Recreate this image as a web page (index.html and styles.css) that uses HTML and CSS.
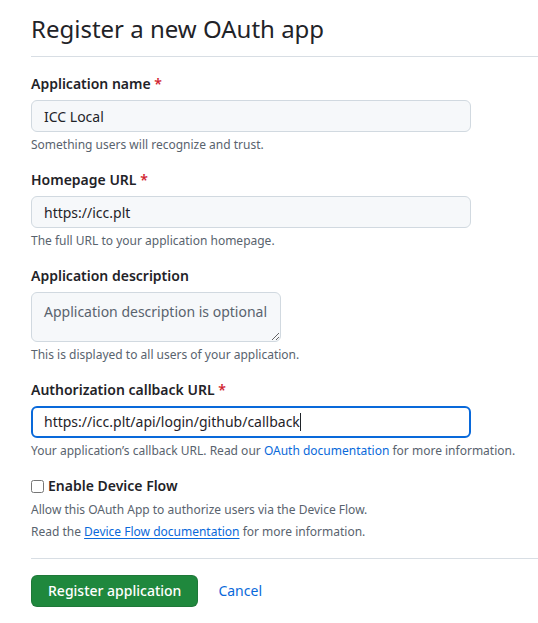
FILE: index.html
```html
<!DOCTYPE html>
<html lang="en">
<head>
<meta charset="utf-8">
<title>Register a new OAuth app</title>
<link rel="stylesheet" href="styles.css">
</head>
<body>
<main class="page">
  <div class="subhead">
    <h1 class="subhead-heading">Register a new OAuth app</h1>
  </div>
  <form class="form">
    <div class="form-group">
      <label class="label" for="name">Application name <span class="req">*</span></label>
      <input class="input" id="name" type="text" value="ICC Local">
      <p class="note">Something users will recognize and trust.</p>
    </div>
    <div class="form-group">
      <label class="label" for="url">Homepage URL <span class="req">*</span></label>
      <input class="input" id="url" type="text" value="https://icc.plt">
      <p class="note">The full URL to your application homepage.</p>
    </div>
    <div class="form-group">
      <label class="label" for="desc">Application description</label>
      <textarea class="textarea" id="desc" placeholder="Application description is optional"></textarea>
      <p class="note">This is displayed to all users of your application.</p>
    </div>
    <div class="form-group">
      <label class="label" for="cb">Authorization callback URL <span class="req">*</span></label>
      <div class="input focused" id="cb" role="textbox">https://icc.plt/api/login/github/callback<span class="caret"></span></div>
      <p class="note">Your application’s callback URL. Read our <a class="link" href="#">OAuth documentation</a> for more information.</p>
    </div>
    <div class="form-group device">
      <label class="check-label"><input class="checkbox" type="checkbox"> Enable Device Flow</label>
      <p class="note first">Allow this OAuth App to authorize users via the Device Flow.</p>
      <p class="note">Read the <a class="link underline" href="#">Device Flow documentation</a> for more information.</p>
    </div>
    <hr class="divider">
    <div class="actions">
      <button class="btn-primary" type="button">Register application</button>
      <a class="btn-link" href="#">Cancel</a>
    </div>
  </form>
</main>
</body>
</html>
```
FILE: styles.css
```css
* { box-sizing: border-box; }

html, body {
  margin: 0;
  padding: 0;
  background: #ffffff;
}

body {
  font-family: "Noto Sans", "Open Sans", sans-serif;
  color: #1f2328;
  font-size: 14px;
  line-height: 20px;
}

.page {
  padding: 14px 0 0 31px;
}

.subhead {
  border-bottom: 1px solid #d8dee4;
  padding-bottom: 12px;
}

.subhead-heading {
  margin: 0;
  font-size: 24px;
  line-height: 30px;
  font-weight: 400;
  color: #1f2328;
}

.form {
  padding-top: 17px;
}

.form-group {
  margin: 0 0 16px 0;
}

.label {
  display: block;
  font-weight: 600;
  font-size: 14px;
  line-height: 20px;
  margin-bottom: 6px;
}

.req {
  color: #d1242f;
}

.input {
  display: block;
  width: 440px;
  height: 32px;
  padding: 5px 12px;
  font-family: inherit;
  font-size: 14px;
  line-height: 20px;
  color: #1f2328;
  background: #f6f8fa;
  border: 1px solid #d1d9e0;
  border-radius: 6px;
  outline: none;
}

.input.focused {
  background: #ffffff;
  border: 2px solid #0969da;
  padding: 4px 11px;
  display: flex;
  align-items: center;
}

.caret {
  display: inline-block;
  width: 1px;
  height: 18px;
  background: #1f2328;
}

.textarea {
  display: block;
  width: 250px;
  height: 50px;
  padding: 9px 12px 7px 12px;
  font-family: inherit;
  font-size: 14px;
  line-height: 20px;
  color: #1f2328;
  background: #f6f8fa;
  border: 1px solid #d1d9e0;
  border-radius: 6px;
  outline: none;
}

.textarea::placeholder {
  color: #59636e;
  opacity: 1;
}

.note {
  margin: 4px 0 0 0;
  font-size: 12px;
  line-height: 18px;
  color: #59636e;
}

.note.first {
  margin-top: 5px;
}

.device {
  margin-bottom: 17px;
}

.check-label {
  display: flex;
  align-items: center;
  gap: 4px;
  font-weight: 600;
  font-size: 14px;
  line-height: 20px;
}

.checkbox {
  margin: 0;
  width: 13px;
  height: 13px;
}

.link {
  color: #0969da;
  text-decoration: none;
}

.link.underline {
  text-decoration: underline;
  text-underline-offset: 2px;
}

.divider {
  margin: 0 0 16px 0;
  border: 0;
  border-top: 1px solid #d8dee4;
  height: 0;
}

.actions {
  display: flex;
  align-items: center;
  gap: 20px;
}

.btn-primary {
  height: 32px;
  padding: 5px 16px;
  font-family: inherit;
  font-size: 14px;
  line-height: 20px;
  font-weight: 500;
  color: #ffffff;
  background: #1f883d;
  border: 1px solid rgba(31, 35, 40, 0.15);
  border-radius: 6px;
  cursor: pointer;
}

.btn-link {
  color: #0969da;
  text-decoration: none;
  font-size: 14px;
}
```
